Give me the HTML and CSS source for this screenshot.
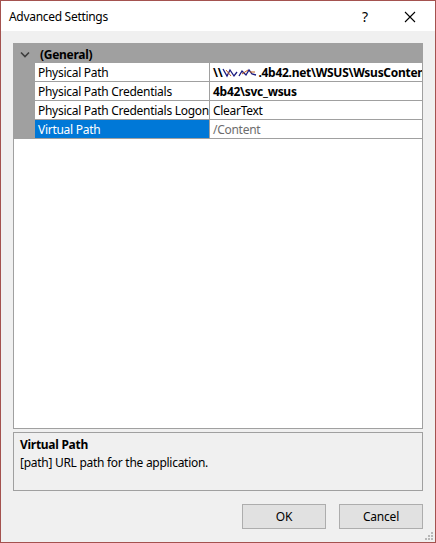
FILE: index.html
```html
<!DOCTYPE html>
<html>
<head>
<meta charset="utf-8">
<title>Advanced Settings</title>
<link rel="stylesheet" href="styles.css">
</head>
<body>
<div class="window">
  <div class="titlebar">
    <span class="title">Advanced Settings</span>
    <span class="help">?</span>
    <svg class="close" width="12" height="12" viewBox="0 0 12 12"><path d="M1 1 L11 11 M11 1 L1 11" stroke="#000" stroke-width="1.1" fill="none"/></svg>
  </div>
  <div class="content">
    <div class="grid">
      <div class="category">
        <svg class="chev" width="10" height="7" viewBox="0 0 10 7"><path d="M1 1.5 L5 5.5 L9 1.5" stroke="#3c3c3c" stroke-width="1.6" fill="none"/></svg>
        <span class="cat-name">(General)</span>
      </div>
      <div class="rows">
        <div class="row">
          <div class="margin"></div>
          <div class="label">Physical Path</div>
          <div class="value bold">\\<svg class="scribble" width="36" height="12" viewBox="0 0 36 12"><path d="M1 3 L5 10 L8 4 L12 10 L15 6 M17 10 L20 5 L24 9 L27 4 L30 8 L34 9" stroke="#1a1a80" stroke-width="1.3" fill="none"/><path d="M4 4 L9 10 M20 8 L26 4 M28 6 L33 6" stroke="#c06020" stroke-width="1" fill="none"/></svg>.4b42.net\WSUS\WsusContent</div>
        </div>
        <div class="row">
          <div class="margin"></div>
          <div class="label">Physical Path Credentials</div>
          <div class="value bold">4b42\svc_wsus</div>
        </div>
        <div class="row">
          <div class="margin"></div>
          <div class="label">Physical Path Credentials Logon</div>
          <div class="value">ClearText</div>
        </div>
        <div class="row selected">
          <div class="margin"></div>
          <div class="label">Virtual Path</div>
          <div class="value muted">/Content</div>
        </div>
      </div>
    </div>
    <div class="description">
      <div class="desc-title">Virtual Path</div>
      <div class="desc-text">[path] URL path for the application.</div>
    </div>
    <div class="buttons">
      <button class="btn">OK</button>
      <button class="btn">Cancel</button>
    </div>
  </div>
  <svg class="grip" width="8" height="8" viewBox="0 0 8 8">
    <rect x="6" y="0" width="2" height="2" fill="#b8b8b8"/>
    <rect x="3" y="3" width="2" height="2" fill="#b8b8b8"/>
    <rect x="6" y="3" width="2" height="2" fill="#b8b8b8"/>
    <rect x="0" y="6" width="2" height="2" fill="#b8b8b8"/>
    <rect x="3" y="6" width="2" height="2" fill="#b8b8b8"/>
    <rect x="6" y="6" width="2" height="2" fill="#b8b8b8"/>
  </svg>
</div>
</body>
</html>
```
FILE: styles.css
```css
* { box-sizing: border-box; }
html, body { margin: 0; padding: 0; }
body {
  font-family: "Noto Sans", "Open Sans", "DejaVu Sans", sans-serif;
  font-size: 12px;
  letter-spacing: -0.28px;
  color: #000;
  background: #f0f0f0;
}
.window {
  position: relative;
  width: 436px;
  height: 543px;
  border: 1px solid #a4524f;
  background: #f0f0f0;
  display: flex;
  flex-direction: column;
}
.titlebar {
  height: 30px;
  background: #fff;
  display: flex;
  align-items: center;
  padding-left: 8px;
  flex: none;
}
.title {
  flex: 1;
  font-size: 12px;
  letter-spacing: -0.3px;
  margin-top: 1px;
}
.help {
  font-size: 14px;
  width: 12px;
  margin-right: 30px;
  margin-top: 1px;
}
.close {
  margin-right: 19px;
  margin-top: 2px;
}
.content {
  flex: 1;
  display: flex;
  flex-direction: column;
  padding: 12px 12px 13px 12px;
}
.grid {
  flex: 1;
  border: 1px solid #a0a0a0;
  background: #fff;
  display: flex;
  flex-direction: column;
}
.category {
  height: 19px;
  background: #a0a0a0;
  display: flex;
  align-items: center;
  padding-top: 1px;
}
.chev {
  margin-left: 6px;
  margin-right: 10px;
}
.cat-name {
  font-weight: bold;
}
.rows {
  display: flex;
  flex-direction: column;
}
.row {
  display: grid;
  grid-template-columns: 21px 175px 1fr;
  height: 19px;
}
.margin {
  background: #a0a0a0;
}
.label, .value {
  border-bottom: 1px solid #a0a0a0;
  padding-left: 3px;
  padding-top: 1px;
  line-height: 17px;
  white-space: nowrap;
  overflow: hidden;
}
.label {
  border-right: 1px solid #a0a0a0;
}
.bold { font-weight: bold; }
.scribble { vertical-align: -1px; }
.muted { color: #6d6d6d; }
.selected .label {
  background: #0078d7;
  color: #fff;
}
.description {
  margin-top: 3px;
  height: 59px;
  border: 1px solid #a0a0a0;
  background: #f0f0f0;
  padding: 3px 6px;
  flex: none;
}
.desc-title {
  font-weight: bold;
  line-height: 18px;
}
.desc-text {
  line-height: 18px;
}
.buttons {
  flex: none;
  display: flex;
  justify-content: flex-end;
  gap: 13px;
  margin-top: 13px;
}
.btn {
  width: 84px;
  height: 25px;
  background: #e1e1e1;
  border: 1px solid #adadad;
  font-family: inherit;
  font-size: 12px;
  letter-spacing: -0.2px;
  color: #000;
  padding: 0;
}
.grip {
  position: absolute;
  right: 2px;
  bottom: 2px;
}
```
